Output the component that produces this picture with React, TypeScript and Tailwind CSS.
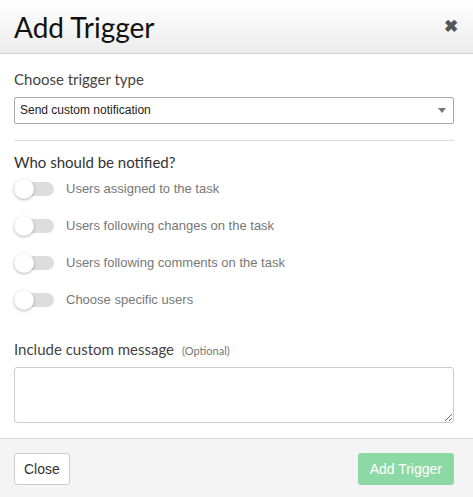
import { useState } from "react";

const RECIPIENTS = [
  "Users assigned to the task",
  "Users following changes on the task",
  "Users following comments on the task",
  "Choose specific users",
];

function Toggle({ on, onChange }: { on: boolean; onChange: () => void }) {
  return (
    <button
      onClick={onChange}
      className={`relative h-[14px] w-[40px] shrink-0 rounded-full ${on ? "bg-[#8cd9a6]" : "bg-[#dddddd]"}`}
    >
      <span
        className={`absolute top-1/2 h-[20px] w-[20px] -translate-y-1/2 rounded-full bg-white shadow-[0_1px_3px_rgba(0,0,0,0.3)] ${on ? "left-[20px]" : "left-0"}`}
      />
    </button>
  );
}

export default function App() {
  const [checked, setChecked] = useState<boolean[]>([false, false, false, false]);
  const heading = { fontFamily: "Lato, 'Open Sans', sans-serif" };
  const body = { fontFamily: "'Liberation Sans', Arial, sans-serif" };

  return (
    <div className="flex h-[497px] w-[473px] flex-col bg-white text-[#333]">
      <header className="flex h-[54px] items-center justify-between border-b border-[#d4d4d4] bg-gradient-to-b from-white to-[#ececec] pl-[14px] pr-[15px]">
        <h1 className="text-[28px] text-[#111]" style={heading}>Add Trigger</h1>
        <button className="text-[17px] font-bold leading-none text-[#555]" style={body}>✖</button>
      </header>

      <div className="flex-1 pl-[14px] pr-[19px] pt-[14px]">
        <div className="text-[15px] text-[#444]" style={heading}>Choose trigger type</div>
        <div className="relative mt-[6px] flex h-[27px] items-center rounded-[2px] border border-[#aaa] px-[5px] text-[12px] text-[#222]" style={body}>
          Send custom notification
          <span className="absolute right-[7px] top-[10px] h-0 w-0 border-x-[4px] border-t-[5px] border-x-transparent border-t-[#777]" />
        </div>

        <div className="mt-[16px] border-t border-[#ddd]" />

        <div className="mt-[10px] text-[15px] text-[#333]" style={heading}>Who should be notified?</div>
        <div className="mt-[6px] flex flex-col gap-[17px]">
          {RECIPIENTS.map((r, i) => (
            <div key={r} className="flex h-[20px] items-center gap-[12px]">
              <Toggle on={checked[i]} onChange={() => setChecked(checked.map((c, j) => (j === i ? !c : c)))} />
              <span className="text-[13px] text-[#777]" style={body}>{r}</span>
            </div>
          ))}
        </div>

        <div className="mt-[28px] flex items-baseline gap-[8px]">
          <span className="text-[15px] text-[#444]" style={heading}>Include custom message</span>
          <span className="text-[11px] text-[#777]" style={heading}>(Optional)</span>
        </div>
        <textarea className="mt-[6px] block h-[56px] w-full rounded-[3px] border border-[#ccc] outline-none" />
      </div>

      <footer className="flex h-[59px] items-center justify-between border-t border-[#d8d8d8] bg-[#f4f4f4] pl-[14px] pr-[19px] pt-[2px]">
        <button className="h-[32px] rounded-[3px] border border-[#ccc] bg-white px-[9px] text-[14px] text-[#333]" style={body}>Close</button>
        <button className="h-[32px] rounded-[3px] bg-[#8cd9a6] px-[12px] text-[14px] text-white" style={body}>Add Trigger</button>
      </footer>
    </div>
  );
}
